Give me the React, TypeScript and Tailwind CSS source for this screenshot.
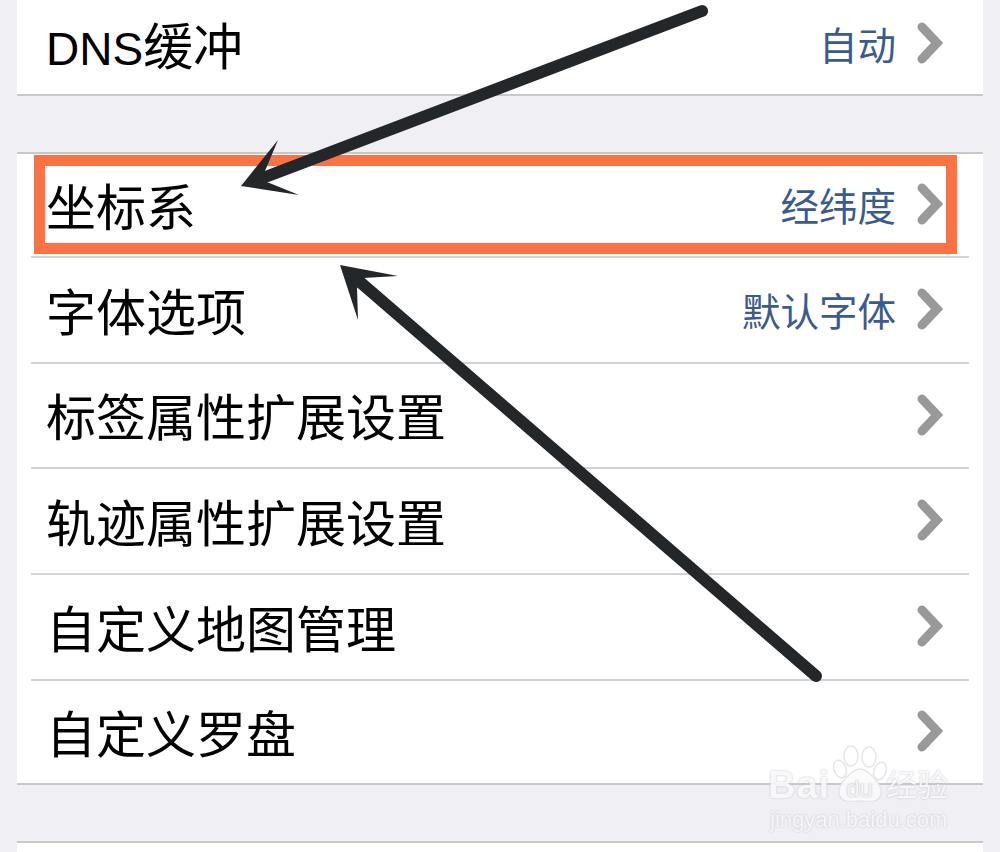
import type { ReactNode } from "react";

const cjk = "font-['Liberation_Sans','Noto_Sans_CJK_SC',sans-serif]";

type RowProps = {
  label: ReactNode;
  value?: string;
  height: string;
  last?: boolean;
};

function Chevron() {
  return (
    <svg width="30" height="42" viewBox="0 0 30 42" fill="none" className="shrink-0 mb-[9px]">
      <path d="M6 5 L21 21 L6 37" stroke="#999999" strokeWidth="9" strokeLinecap="round" strokeLinejoin="miter" />
    </svg>
  );
}

function Row({ label, value, height, last }: RowProps) {
  return (
    <div className={`mx-[14px] flex items-center pl-[15px] pr-[23px] pt-[7px] ${height} ${last ? "" : "border-b-2 border-[#d2d2d6]"}`}>
      <span className="text-[50px] leading-none text-black">{label}</span>
      <div className="ml-auto flex items-center gap-[20px]">
        {value && <span className="text-[38.5px] leading-none text-[#3a5b92]">{value}</span>}
        <Chevron />
      </div>
    </div>
  );
}

function Arrows() {
  return (
    <svg className="absolute inset-0 pointer-events-none" width="1000" height="852" viewBox="0 0 1000 852">
      <path d="M702 11 L268 176" stroke="#24272a" strokeWidth="12" strokeLinecap="round" />
      <path d="M241 186 L278 140 L265 171 L267 182 L299 195 Z" fill="#24272a" />
      <path d="M816 676 L360 282" stroke="#24272a" strokeWidth="12" strokeLinecap="round" />
      <path d="M340 265 L398 276 L363 278 L357 288 L358 320 Z" fill="#24272a" />
    </svg>
  );
}

function Paw() {
  return (
    <svg className="absolute left-0 top-0" width="56" height="60" viewBox="0 0 56 60" fill="none" stroke="#e4e4e8" strokeWidth="1.5">
      <ellipse cx="7" cy="25" rx="6" ry="9" transform="rotate(-20 7 25)" />
      <ellipse cx="18" cy="12" rx="7" ry="10" />
      <ellipse cx="36" cy="13" rx="7" ry="10" />
      <ellipse cx="47" cy="27" rx="6" ry="9" transform="rotate(20 47 27)" />
      <path d="M27 25 C20 25 4 40 6 50 C8 60 20 57 27 57 C34 57 46 60 48 50 C50 40 34 25 27 25 Z" fill="#fbfbfc" />
    </svg>
  );
}

function Watermark() {
  return (
    <div className="absolute left-[768px] top-[744px] flex w-[180px] flex-col pointer-events-none opacity-90">
      <div className="flex h-[60px] items-end">
        <span className="text-[38px] leading-[38px] font-bold tracking-[1px] text-[#f8f8fa] [text-shadow:0_0_2px_#b9b9c0]">Bai</span>
        <div className="relative ml-[3px] flex h-[60px] w-[56px] items-end justify-center pb-[3px]">
          <Paw />
          <span className="relative text-[24px] leading-none text-[#f4f4f6] [text-shadow:0_0_2px_#a8a8b0]">du</span>
        </div>
        <span className="ml-auto pb-[1px] text-[31px] leading-[34px] whitespace-nowrap text-[#f8f8fa] [text-shadow:0_0_2px_#b9b9c0]">经验</span>
      </div>
      <span className="mt-[5px] pl-[2px] text-[22px] leading-none whitespace-nowrap text-[#f8f8fa] [text-shadow:0_0_2px_#b9b9c0]">jingyan.baidu.com</span>
    </div>
  );
}

export default function App() {
  return (
    <div className={`relative w-[1000px] h-[852px] overflow-hidden bg-[#efeff4] ${cjk}`}>
      <div className="mx-[17px] bg-white pb-[6px] border-b-2 border-[#c8c8cc]">
        <Row label={<><span className="text-[46px]">DNS</span>缓冲</>} value="自动" height="h-[88px]" last />
      </div>

      <div className="mx-[17px] mt-[56px] bg-white border-y-2 border-[#c8c8cc]">
        <Row label="坐标系" value="经纬度" height="h-[104px]" />
        <Row label="字体选项" value="默认字体" height="h-[106px]" />
        <Row label="标签属性扩展设置" height="h-[105px]" />
        <Row label="轨迹属性扩展设置" height="h-[106px]" />
        <Row label="自定义地图管理" height="h-[106px]" />
        <Row label="自定义罗盘" height="h-[102px]" last />
      </div>

      <div className="mx-[17px] mt-[56px] h-[20px] bg-white border-t-2 border-[#c8c8cc]" />

      <div className="absolute left-[34px] top-[155px] w-[923px] h-[99px] border-[11px] border-[#fd7242]" />
      <Arrows />
      <Watermark />
    </div>
  );
}
